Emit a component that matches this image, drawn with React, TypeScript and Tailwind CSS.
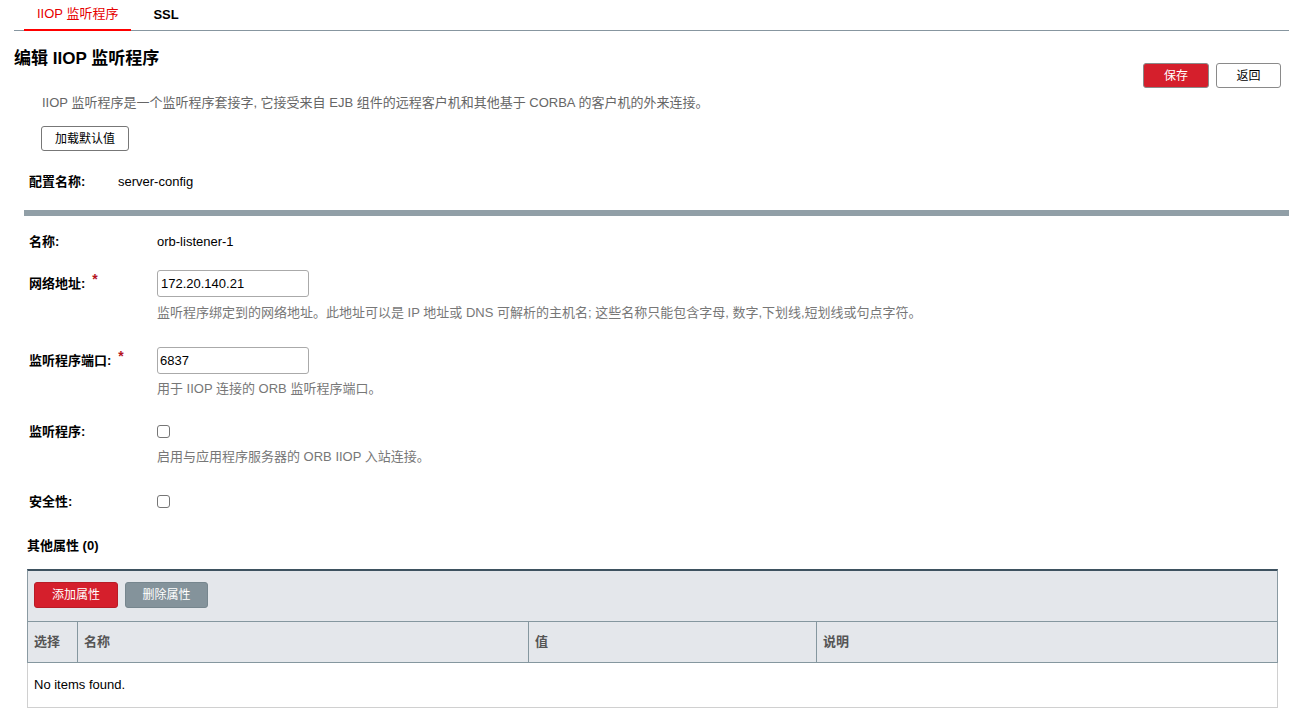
import React from "react";

const font = "font-['Liberation_Sans','Noto_Sans_CJK_SC',sans-serif]";

function Req() {
    return <span className="ml-[7px] relative -top-[4px] text-[#b4141e] text-[14px]">*</span>;
}

function Field({ label, required, children }: { label: string; required?: boolean; children: React.ReactNode }) {
    return (
        <div className="grid grid-cols-[128px_1fr] pl-[5px]">
            <div className="font-bold text-[13px] leading-[16px] pt-[5px]">
                {label}
                {required && <Req />}
            </div>
            <div>{children}</div>
        </div>
    );
}

export default function App() {
    return (
        <div className={`${font} min-h-screen bg-white text-[13px] text-black`}>
            {/* Tabs */}
            <div className="ml-[14px] flex h-[31px] items-stretch border-b border-[#8796a0]">
                <div className="ml-[10px] flex items-center border-b-2 border-[#ff0000] px-[13px] pb-[1px] text-[#e60000] -mb-[1px]">
                    IIOP 监听程序
                </div>
                <div className="flex items-center px-[22px] pb-[1px] font-bold">SSL</div>
            </div>

            {/* Title row */}
            <div className="flex items-start justify-between pl-[14px] pr-[8px] pt-[18px]">
                <h1 className="text-[17px] font-bold leading-[20px]">编辑 IIOP 监听程序</h1>
                <div className="mt-[14px] flex gap-[7px]">
                    <button className="h-[25px] w-[66px] rounded-[3px] border border-[#8a8a8a] bg-[#d51f2c] text-[12px] text-white">保存</button>
                    <button className="h-[25px] w-[65px] rounded-[3px] border border-[#8a8a8a] bg-white text-[12px]">返回</button>
                </div>
            </div>

            <p className="ml-[42px] mt-[7px] leading-[16px] text-[#666]">
                IIOP 监听程序是一个监听程序套接字, 它接受来自 EJB 组件的远程客户机和其他基于 CORBA 的客户机的外来连接。
            </p>

            <button className="ml-[41px] mt-[15px] h-[25px] w-[88px] rounded-[3px] border border-[#777] bg-white text-[12px]">加载默认值</button>

            <div className="ml-[29px] mt-[23px] flex leading-[16px]">
                <span className="w-[89px] font-bold">配置名称:</span>
                <span>server-config</span>
            </div>

            <div className="ml-[24px] mt-[20px] h-[6px] bg-[#919fa7]" />

            {/* Form */}
            <div className="ml-[24px] flex flex-col">
                <div className="mt-[18px] grid grid-cols-[128px_1fr] pl-[5px] leading-[16px]">
                    <span className="font-bold">名称:</span>
                    <span>orb-listener-1</span>
                </div>

                <div className="mt-[20px]">
                    <Field label="网络地址:" required>
                        <input
                            defaultValue="172.20.140.21"
                            className="h-[27px] w-[152px] rounded-[3px] border border-[#aaa] px-[3px] text-[13px] outline-none"
                        />
                        <p className="mt-[8px] leading-[16px] text-[#777]">
                            监听程序绑定到的网络地址。此地址可以是 IP 地址或 DNS 可解析的主机名; 这些名称只能包含字母, 数字,下划线,短划线或句点字符。
                        </p>
                    </Field>
                </div>

                <div className="mt-[26px]">
                    <Field label="监听程序端口:" required>
                        <input
                            defaultValue="6837"
                            className="h-[27px] w-[152px] rounded-[3px] border border-[#aaa] px-[2px] text-[13px] outline-none"
                        />
                        <p className="mt-[7px] leading-[16px] text-[#777]">用于 IIOP 连接的 ORB 监听程序端口。</p>
                    </Field>
                </div>

                <div className="mt-[26px] grid grid-cols-[128px_1fr] pl-[5px]">
                    <span className="font-bold leading-[16px] pt-[1px]">监听程序:</span>
                    <div>
                        <div className="mt-[2px] h-[13px] w-[13px] rounded-[3px] border border-[#767676] bg-white" />
                        <p className="mt-[11px] leading-[16px] text-[#777]">启用与应用程序服务器的 ORB IIOP 入站连接。</p>
                    </div>
                </div>

                <div className="mt-[29px] grid grid-cols-[128px_1fr] pl-[5px]">
                    <span className="font-bold leading-[16px]">安全性:</span>
                    <div className="mt-[1px] h-[13px] w-[13px] rounded-[3px] border border-[#767676] bg-white" />
                </div>
            </div>

            {/* Additional properties */}
            <div className="ml-[27px] mr-[11px]">
                <h2 className="mt-[28px] font-bold leading-[16px]">其他属性 (0)</h2>

                <div className="mt-[15px] border-t-2 border-[#3e5260] border-l border-r border-l-[#8a9aa2] border-r-[#8a9aa2] bg-[#e4e7eb]">
                    <div className="flex gap-[7px] px-[6px] pt-[11px] pb-[13px]">
                        <button className="h-[26px] w-[84px] rounded-[3px] border border-[#b81c26] bg-[#d51f2c] text-[12px] text-white">添加属性</button>
                        <button className="h-[26px] w-[83px] rounded-[3px] border border-[#76868e] bg-[#84939b] text-[12px] text-white">删除属性</button>
                    </div>
                    <div className="grid h-[42px] grid-cols-[49px_451px_288px_1fr] border-t border-b border-[#85979f] font-bold text-[#555]">
                        <div className="flex items-center pl-[6px]">选择</div>
                        <div className="flex items-center border-l border-[#85979f] pl-[6px]">名称</div>
                        <div className="flex items-center border-l border-[#85979f] pl-[6px]">值</div>
                        <div className="flex items-center border-l border-[#85979f] pl-[6px]">说明</div>
                    </div>
                </div>
                <div className="flex h-[45px] items-center border-b border-l border-r border-[#d0d0d0] pl-[6px] text-black">
                    No items found.
                </div>
            </div>
        </div>
    );
}
